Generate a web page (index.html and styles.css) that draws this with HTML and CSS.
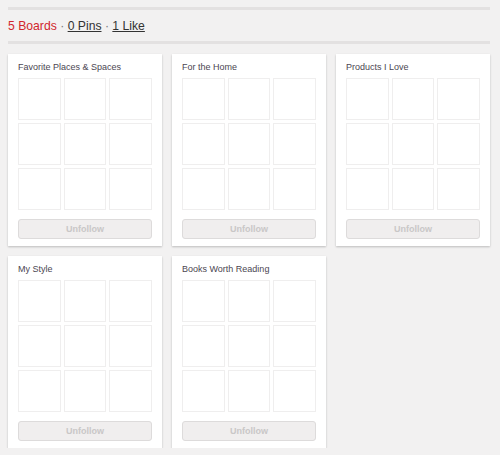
FILE: index.html
```html
<!DOCTYPE html>
<html>
<head>
<meta charset="utf-8">
<link rel="stylesheet" href="styles.css">
</head>
<body>
<div class="page">
  <div class="rule"></div>
  <div class="stats">
    <span class="boards">5 Boards</span><span class="dot"> · </span><a class="link" href="#">0 Pins</a><span class="dot"> · </span><a class="link" href="#">1 Like</a>
  </div>
  <div class="rule"></div>
  <div class="boards-grid">
    <div class="card">
      <div class="title">Favorite Places &amp; Spaces</div>
      <div class="thumbs"><i></i><i></i><i></i><i></i><i></i><i></i><i></i><i></i><i></i></div>
      <button class="btn">Unfollow</button>
    </div>
    <div class="card">
      <div class="title">For the Home</div>
      <div class="thumbs"><i></i><i></i><i></i><i></i><i></i><i></i><i></i><i></i><i></i></div>
      <button class="btn">Unfollow</button>
    </div>
    <div class="card">
      <div class="title">Products I Love</div>
      <div class="thumbs"><i></i><i></i><i></i><i></i><i></i><i></i><i></i><i></i><i></i></div>
      <button class="btn">Unfollow</button>
    </div>
    <div class="card">
      <div class="title">My Style</div>
      <div class="thumbs"><i></i><i></i><i></i><i></i><i></i><i></i><i></i><i></i><i></i></div>
      <button class="btn">Unfollow</button>
    </div>
    <div class="card">
      <div class="title">Books Worth Reading</div>
      <div class="thumbs"><i></i><i></i><i></i><i></i><i></i><i></i><i></i><i></i><i></i></div>
      <button class="btn">Unfollow</button>
    </div>
  </div>
</div>
</body>
</html>
```

FILE: styles.css
```css
html, body {
  margin: 0;
  padding: 0;
  background: #f2f1f1;
  font-family: "Liberation Sans", Arial, sans-serif;
}
.page {
  padding: 7px 10px 0 8px;
}
.rule {
  height: 3px;
  background: #e3e1e1;
}
.stats {
  padding: 9px 0 8px;
  line-height: 14px;
  font-size: 12.2px;
  color: #555;
}
.boards {
  color: #d1272d;
}
.dot {
  color: #777;
}
.link {
  color: #333;
  text-decoration: underline;
}
.boards-grid {
  display: grid;
  grid-template-columns: repeat(3, 154px);
  gap: 10px;
  margin-top: 10px;
}
.card {
  background: #fff;
  box-shadow: 0 1px 2px rgba(0, 0, 0, 0.22);
  padding: 7px 10px 7px;
  display: flex;
  flex-direction: column;
}
.title {
  font-size: 9px;
  line-height: 12px;
  color: #4b4651;
  margin-bottom: 5px;
  white-space: nowrap;
}
.thumbs {
  display: grid;
  grid-template-columns: repeat(3, 1fr);
  grid-auto-rows: 42px;
  gap: 3px;
}
.thumbs i {
  display: block;
  border: 1px solid #efeeee;
  background: #fff;
}
.btn {
  margin-top: 9px;
  height: 20px;
  padding: 0;
  border: 1px solid #dddbdb;
  border-radius: 3px;
  background: #f0eeee;
  color: #c9c7c7;
  font-family: "Liberation Sans", Arial, sans-serif;
  font-weight: bold;
  font-size: 9px;
}
```
